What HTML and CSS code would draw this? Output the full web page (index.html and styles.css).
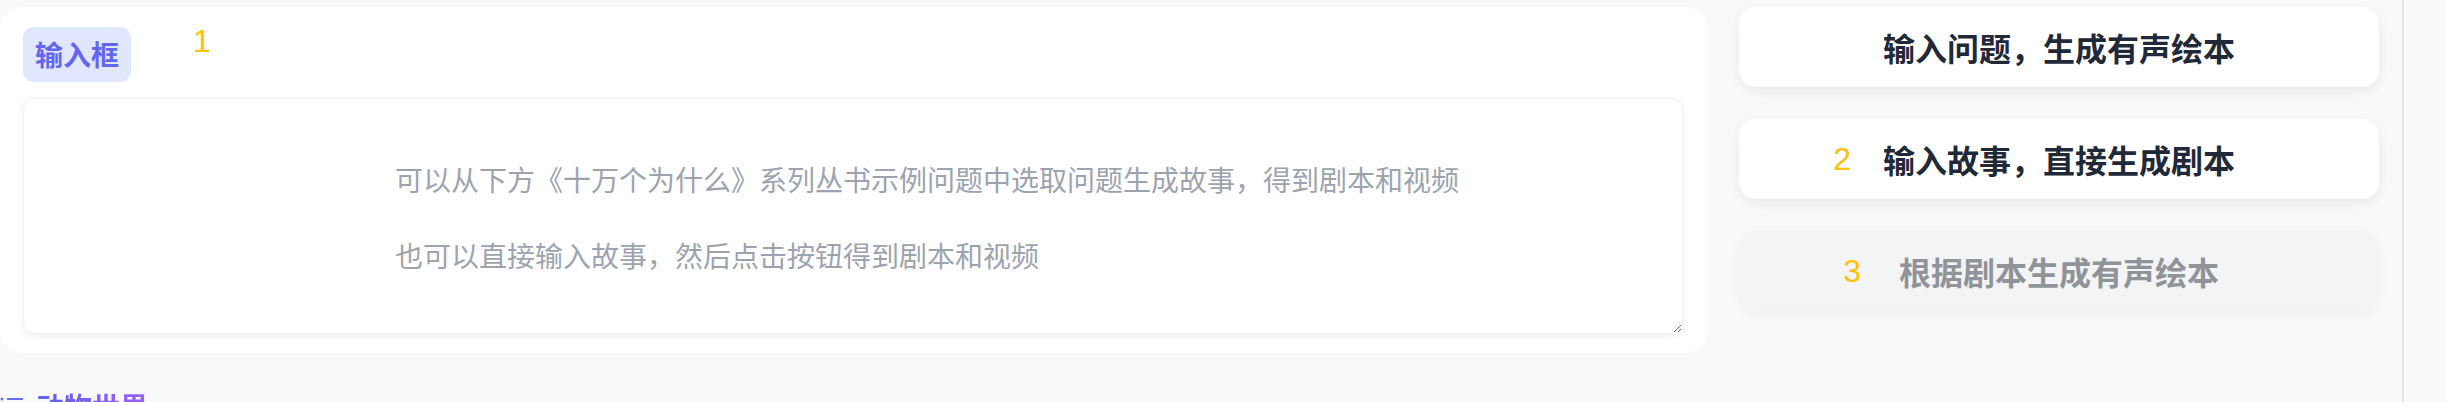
FILE: index.html
```html
<!DOCTYPE html>
<html lang="zh-CN">
<head>
    <meta charset="UTF-8">
    <title>有声绘本</title>
    <link rel="stylesheet" href="styles.css">
</head>
<body>
    <div id="page">
        <div id="main">
            <div class="top-row">
                <div class="input-card">
                    <div class="card-head">
                        <span class="tag">输入框</span>
                        <span class="step-num head-num">1</span>
                    </div>
                    <textarea class="story-input" placeholder="可以从下方《十万个为什么》系列丛书示例问题中选取问题生成故事，得到剧本和视频&#10;&#10;也可以直接输入故事，然后点击按钮得到剧本和视频"></textarea>
                </div>
                <div class="btn-col">
                    <div class="step-btn"><span class="btn-text">输入问题，生成有声绘本</span></div>
                    <div class="step-btn"><span class="btn-text"><span class="step-num btn-num">2</span>输入故事，直接生成剧本</span></div>
                    <div class="step-btn disabled"><span class="btn-text"><span class="step-num btn-num num-3">3</span>根据剧本生成有声绘本</span></div>
                </div>
            </div>
            <div class="section-title">
                <svg class="list-icon" width="24" height="24" viewBox="0 0 24 24">
                    <circle cx="2" cy="5" r="1.5" fill="#6b6ef5"/>
                    <rect x="7" y="4" width="16" height="2" fill="#6b6ef5"/>
                    <circle cx="2" cy="12" r="1.5" fill="#6b6ef5"/>
                    <rect x="7" y="11" width="16" height="2" fill="#6b6ef5"/>
                    <circle cx="2" cy="19" r="1.5" fill="#6b6ef5"/>
                    <rect x="7" y="18" width="16" height="2" fill="#6b6ef5"/>
                </svg>
                <span class="title-text">动物世界</span>
            </div>
        </div>
        <div id="side"></div>
    </div>
</body>
</html>
```

FILE: styles.css
```css
*{
    margin: 0;
    padding: 0;
    box-sizing: border-box;
}
html, body{
    height: 100%;
    overflow: hidden;
}
body{
    background: #f8f9fb;
    font-family: "Liberation Sans", "Noto Sans CJK SC", sans-serif;
}
#page{
    display: flex;
    height: 100%;
}
#main{
    width: 2404px;
    border-right: 2px solid #e6e7ea;
    padding-top: 7px;
}
#side{
    flex: 1;
}
.top-row{
    display: flex;
    align-items: flex-start;
    gap: 32px;
}
.input-card{
    width: 1707px;
    background: #fff;
    border-radius: 22px;
    padding: 20px 24px 19px 23px;
}
.card-head{
    display: flex;
    align-items: flex-start;
    margin-bottom: 16px;
}
.tag{
    background: #e0e7ff;
    color: #6366f1;
    font-family: "Noto Sans CJK SC", sans-serif;
    font-weight: bold;
    font-size: 28px;
    line-height: 35px;
    padding: 10px 12px;
    border-radius: 11px;
}
.step-num{
    color: #ffc107;
    font-size: 32px;
    line-height: 1;
}
.head-num{
    margin-left: 62px;
    margin-top: -2px;
}
.story-input{
    display: block;
    width: 100%;
    height: 236px;
    border: 1px solid #f3f3f4;
    border-radius: 12px;
    box-shadow: 0 2px 8px rgba(0,0,0,0.07);
    padding: 61px 24px 0 371px;
    font-family: "Noto Sans CJK SC", sans-serif;
    font-size: 28px;
    line-height: 38px;
    color: #374151;
    outline: none;
    resize: both;
}
.story-input::placeholder{
    color: #9ca3af;
}
.btn-col{
    width: 640px;
    display: flex;
    flex-direction: column;
    gap: 32px;
}
.step-btn{
    height: 80px;
    background: #fff;
    border-radius: 17px;
    box-shadow: 0 4px 12px rgba(0,0,0,0.07);
    display: flex;
    align-items: center;
    justify-content: center;
    cursor: pointer;
}
.btn-text{
    position: relative;
    font-family: "Noto Sans CJK SC", sans-serif;
    font-weight: bold;
    font-size: 32px;
    color: #1f2937;
}
.btn-num{
    position: absolute;
    right: calc(100% + 32px);
    top: 50%;
    margin-top: -16px;
    font-family: "Liberation Sans", sans-serif;
    font-weight: normal;
}
.num-3{
    right: calc(100% + 38px);
}
.step-btn.disabled{
    background: #f3f4f6;
    box-shadow: 0 4px 12px rgba(0,0,0,0.04);
    cursor: not-allowed;
}
.step-btn.disabled .btn-text{
    color: #909398;
}
.section-title{
    display: flex;
    align-items: center;
    gap: 12px;
    margin-top: 33px;
}
.list-icon{
    flex: none;
}
.title-text{
    font-family: "Noto Sans CJK SC", sans-serif;
    font-weight: bold;
    font-size: 28px;
    background: linear-gradient(90deg, #5b5ff0, #a160f5);
    -webkit-background-clip: text;
    background-clip: text;
    color: transparent;
}
```
